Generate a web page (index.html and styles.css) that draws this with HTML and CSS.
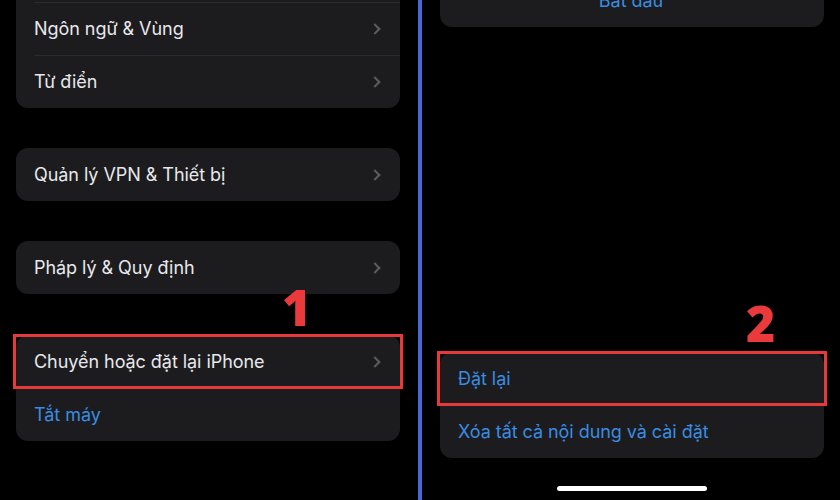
FILE: index.html
```html
<!DOCTYPE html>
<html lang="vi">
<head>
<meta charset="utf-8">
<title>Cài đặt chung</title>
<link rel="stylesheet" href="styles.css">
</head>
<body>
<div class="screen">
  <section class="panel panel-left">
    <div class="card card-first">
      <div class="row"></div>
      <div class="row"><span class="label">Ngôn ngữ &amp; Vùng</span><span class="chev"></span></div>
      <div class="row"><span class="label">Từ điển</span><span class="chev"></span></div>
    </div>
    <div class="card">
      <div class="row"><span class="label">Quản lý VPN &amp; Thiết bị</span><span class="chev"></span></div>
    </div>
    <div class="card">
      <div class="row"><span class="label">Pháp lý &amp; Quy định</span><span class="chev"></span></div>
    </div>
    <div class="card card-last">
      <div class="row marked"><span class="label">Chuyển hoặc đặt lại iPhone</span><span class="chev"></span><span class="step step-1">1</span></div>
      <div class="row"><span class="label link">Tắt máy</span></div>
    </div>
  </section>
  <div class="divider"></div>
  <section class="panel panel-right">
    <div class="card card-top">
      <div class="row center"><span class="label link">Bắt đầu</span></div>
    </div>
    <div class="card card-bottom">
      <div class="row marked"><span class="label link">Đặt lại</span><span class="step step-2">2</span></div>
      <div class="row"><span class="label link">Xóa tất cả nội dung và cài đặt</span></div>
    </div>
    <div class="home-indicator"></div>
  </section>
</div>
</body>
</html>
```

FILE: styles.css
```css
* { box-sizing: border-box; }
html, body {
  margin: 0;
  padding: 0;
  background: #000;
}
body {
  width: 840px;
  height: 500px;
  overflow: hidden;
  font-family: Inter, "Noto Sans", "Liberation Sans", sans-serif;
}
.screen {
  display: flex;
  width: 840px;
  height: 500px;
}
.panel {
  height: 500px;
  display: flex;
  flex-direction: column;
}
.panel-left {
  width: 418px;
  padding: 0 18px 0 16px;
}
.divider {
  width: 4px;
  height: 500px;
  background: #4a67dc;
}
.panel-right {
  flex: 1;
  padding: 0 16px 0 18px;
}
.card {
  background: #1c1c1e;
  border-radius: 12px;
}
.row {
  position: relative;
  height: 53px;
  display: flex;
  align-items: center;
  justify-content: space-between;
  padding: 0 20px 0 18px;
}
.row + .row::before {
  content: "";
  position: absolute;
  left: 18px;
  right: 0;
  top: 0;
  height: 1px;
  background: #2c2c2e;
}
.label {
  color: #e8e8ec;
  font-size: 18px;
  letter-spacing: -0.05px;
  white-space: nowrap;
}
.label.link { color: #3a8ce2; }
.row.center { justify-content: center; }
.chev {
  width: 8px;
  height: 8px;
  border-top: 2px solid #5b5b60;
  border-right: 2px solid #5b5b60;
  transform: rotate(45deg);
  margin-right: 1px;
}
.card-first { margin-top: -51px; }
.card + .card { margin-top: 40px; }
.card-last { margin-top: 41px !important; }
.marked::after {
  content: "";
  position: absolute;
  left: -3px;
  right: -3px;
  top: -1px;
  bottom: -1px;
  border: 3px solid #e7383a;
  z-index: 2;
}
.card-last .row:nth-child(2)::before { display: none; }
.card-bottom .row:nth-child(2)::before { display: none; }
.step {
  position: absolute;
  color: #ea3a3c;
  font-family: "Open Sans", "Liberation Sans", sans-serif;
  font-weight: 800;
  font-size: 50px;
  line-height: 1;
}
.step-1 { left: 266px; top: -53px; }
.step-2 { left: 306px; top: -54px; }
.card-top { margin-top: -26px; }
.card-bottom { margin-top: auto !important; }
.home-indicator {
  align-self: center;
  width: 150px;
  height: 5px;
  border-radius: 3px;
  background: #fff;
  margin: 28px 0 9px;
}
```
